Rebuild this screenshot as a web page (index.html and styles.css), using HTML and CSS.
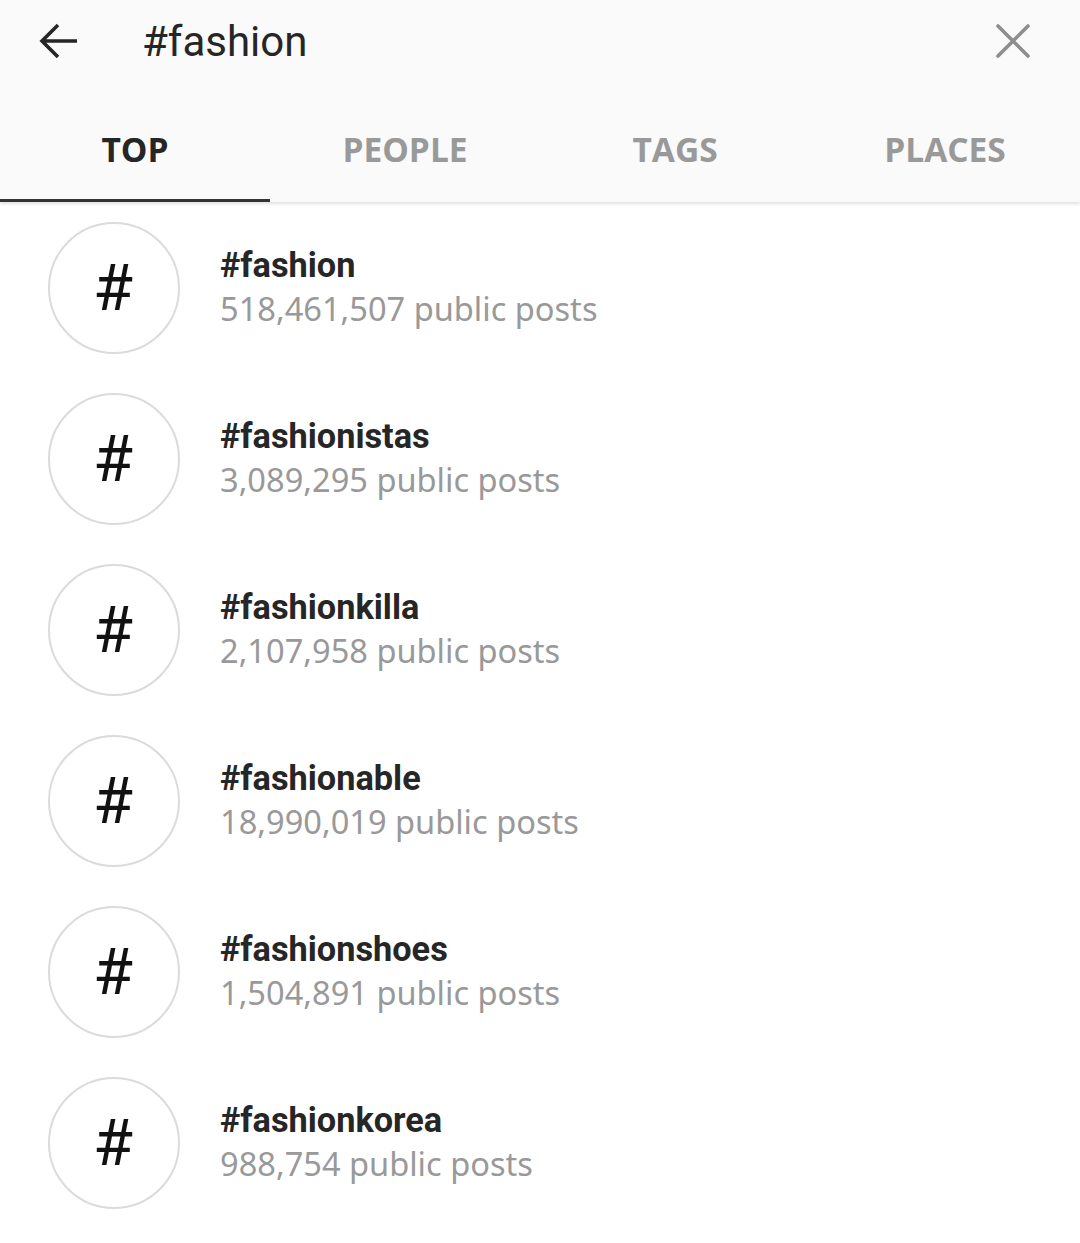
FILE: index.html
```html
<!DOCTYPE html>
<html>
<head>
<meta charset="utf-8">
<link rel="stylesheet" href="styles.css">
</head>
<body>
<header class="header">
  <div class="search-row">
    <svg class="back" width="44" height="44" viewBox="0 0 44 44"><path d="M41 22H6M22 6L6 22l16 16" fill="none" stroke="#262626" stroke-width="3.6" stroke-linecap="butt" stroke-linejoin="miter"/></svg>
    <div class="query">#fashion</div>
    <svg class="clear" width="36" height="36" viewBox="0 0 36 36"><path d="M3 3L33 33M33 3L3 33" fill="none" stroke="#8e8e8e" stroke-width="3.6" stroke-linecap="round"/></svg>
  </div>
  <nav class="tabs">
    <div class="tab active">TOP</div>
    <div class="tab">PEOPLE</div>
    <div class="tab">TAGS</div>
    <div class="tab">PLACES</div>
  </nav>
</header>
<main class="list">
  <div class="row"><div class="avatar">#</div><div class="info"><div class="title">#fashion</div><div class="sub">518,461,507 public posts</div></div></div>
  <div class="row"><div class="avatar">#</div><div class="info"><div class="title">#fashionistas</div><div class="sub">3,089,295 public posts</div></div></div>
  <div class="row"><div class="avatar">#</div><div class="info"><div class="title">#fashionkilla</div><div class="sub">2,107,958 public posts</div></div></div>
  <div class="row"><div class="avatar">#</div><div class="info"><div class="title">#fashionable</div><div class="sub">18,990,019 public posts</div></div></div>
  <div class="row"><div class="avatar">#</div><div class="info"><div class="title">#fashionshoes</div><div class="sub">1,504,891 public posts</div></div></div>
  <div class="row"><div class="avatar">#</div><div class="info"><div class="title">#fashionkorea</div><div class="sub">988,754 public posts</div></div></div>
</main>
</body>
</html>
```
FILE: styles.css
```css
html, body {
  margin: 0;
  padding: 0;
  background: #ffffff;
  font-family: Roboto, "Noto Sans", sans-serif;
}
.header {
  background: #fafafa;
  height: 202px;
  box-shadow: 0 2px 3px rgba(0,0,0,0.12);
  position: relative;
  display: flex;
  flex-direction: column;
}
.search-row {
  height: 82px;
  display: flex;
  align-items: center;
  padding: 0 0 0 36px;
}
.back { display: block; flex: none; }
.query {
  margin-left: 62px;
  font-size: 42px;
  color: #262626;
  flex: 1;
}
.clear { display: block; flex: none; margin-right: 49px; }
.tabs {
  flex: 1;
  display: grid;
  grid-template-columns: repeat(4, 1fr);
}
.tab {
  display: flex;
  align-items: center;
  justify-content: center;
  font-family: "Open Sans", sans-serif;
  font-weight: 700;
  font-size: 33.5px;
  color: #999999;
  padding-top: 14px;
}
.tab.active {
  color: #262626;
  box-shadow: inset 0 -3px 0 #333333;
}
.list {
  display: flex;
  flex-direction: column;
}
.row {
  height: 171px;
  display: flex;
  align-items: center;
  padding-left: 48px;
}
.avatar {
  box-sizing: content-box;
  width: 126px;
  height: 128px;
  padding-right: 2px;
  border: 2px solid #dbdbdb;
  border-radius: 50%;
  display: flex;
  align-items: center;
  justify-content: center;
  font-family: Roboto, sans-serif;
  font-weight: 400;
  font-size: 65px;
  color: #111;
  flex: none;
}
.info {
  margin-left: 40px;
  display: flex;
  flex-direction: column;
}
.title {
  font-family: Roboto, sans-serif;
  font-weight: 700;
  font-size: 34.3px;
  color: #262626;
  line-height: 42px;
}
.sub {
  font-family: "Noto Sans", sans-serif;
  font-size: 32.6px;
  color: #999999;
  line-height: 45px;
}
```
